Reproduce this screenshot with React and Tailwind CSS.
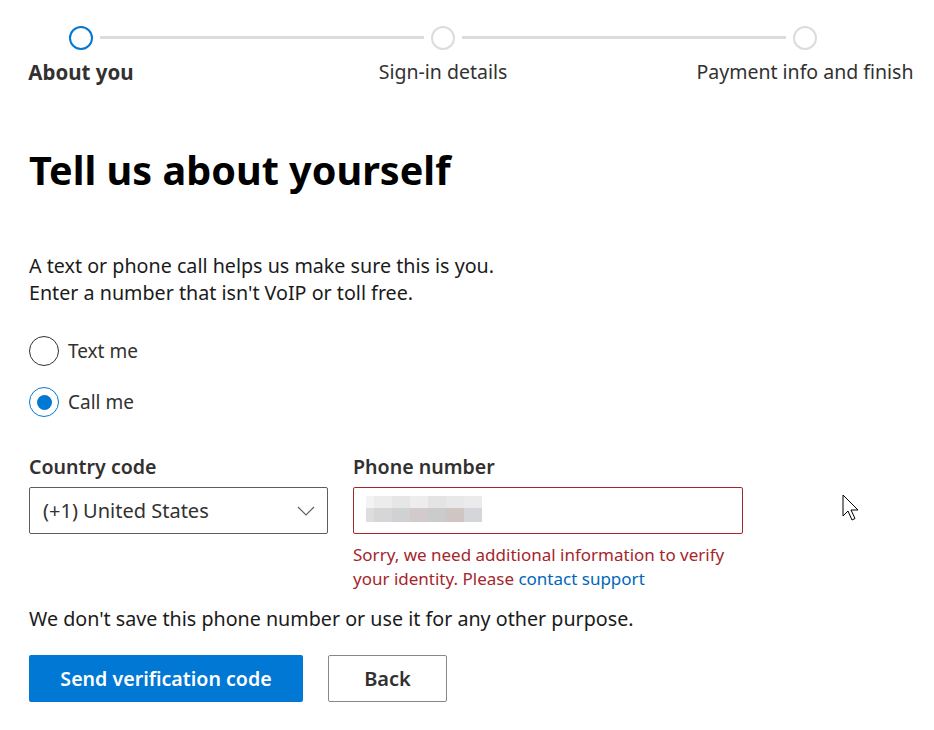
import React from "react";

function Step({ label, active, bold }) {
  return (
    <div className="flex w-6 flex-col items-center">
      <div
        className={`h-6 w-6 rounded-full border-2 ${active ? "border-[#0078d4]" : "border-[#dcdcdc]"}`}
      />
      <div
        className={`mt-[10px] whitespace-nowrap leading-6 text-[#323130] ${bold ? "text-[20.5px] font-bold" : "text-[19.5px]"}`}
      >
        {label}
      </div>
    </div>
  );
}

function Radio({ label, checked }) {
  return (
    <label className="flex h-[30px] items-center gap-[9px]">
      <span
        className={`flex h-[30px] w-[30px] items-center justify-center rounded-full border ${checked ? "border-[#0078d4]" : "border-[#323130]"}`}
      >
        {checked && <span className="h-[15px] w-[15px] rounded-full bg-[#0078d4]" />}
      </span>
      <span className="text-[19px] text-[#323130]">{label}</span>
    </label>
  );
}

export default function App() {
  return (
    <div
      className="relative min-h-[730px] w-[934px] bg-white px-[29px] pt-[26px] text-[#1b1b1b]"
      style={{ fontFamily: '"Noto Sans", "Open Sans", Arial, sans-serif' }}
    >
      {/* stepper */}
      <div className="ml-[40px] flex w-[748px] items-start">
        <Step label="About you" active bold />
        <div className="mx-[7px] mt-[10px] h-[3px] flex-1 bg-[#dcdcdc]" />
        <Step label="Sign-in details" />
        <div className="mx-[7px] mt-[10px] h-[3px] flex-1 bg-[#dcdcdc]" />
        <Step label="Payment info and finish" />
      </div>

      <h1 className="mt-[62px] text-[39.6px] font-bold leading-[48px] text-black">Tell us about yourself</h1>

      <p className="mt-[58px] text-[19.7px] leading-[27px]">
        A text or phone call helps us make sure this is you.
        <br />
        Enter a number that isn't VoIP or toll free.
      </p>

      <div className="mt-[30px] flex flex-col gap-[21px]">
        <Radio label="Text me" />
        <Radio label="Call me" checked />
      </div>

      <div className="mt-[38px] flex gap-[25px]">
        <div className="w-[299px]">
          <div className="text-[19.6px] font-semibold leading-6 text-[#323130]">Country code</div>
          <div className="mt-[8px] flex h-[47px] items-center justify-between rounded-[2px] border border-[#605e5c] pl-[13px] pr-[12px]">
            <span className="text-[20px] text-[#323130]">(+1) United States</span>
            <svg width="18" height="10" viewBox="0 0 18 10" fill="none">
              <path d="M1 1l8 8 8-8" stroke="#605e5c" strokeWidth="1.2" />
            </svg>
          </div>
        </div>
        <div className="w-[390px]">
          <div className="text-[19.6px] font-semibold leading-6 text-[#323130]">Phone number</div>
          <div className="relative mt-[8px] h-[47px] rounded-[2px] border border-[#a4262c]">
            <div className="absolute left-[12px] top-[8px] flex flex-col">
              <div className="flex h-[12px]">
                <span className="w-[8px] bg-[#f3f3f3]" />
                <span className="w-[18px] bg-[#ececec]" />
                <span className="w-[18px] bg-[#e6e6e6]" />
                <span className="w-[18px] bg-[#ededed]" />
                <span className="w-[18px] bg-[#e4e4e4]" />
                <span className="w-[18px] bg-[#e8e8e8]" />
                <span className="w-[18px] bg-[#ebebeb]" />
              </div>
              <div className="flex h-[14px]">
                <span className="w-[8px] bg-[#dedcdc]" />
                <span className="w-[18px] bg-[#d6d6d8]" />
                <span className="w-[18px] bg-[#cfd1d3]" />
                <span className="w-[18px] bg-[#d2cacb]" />
                <span className="w-[18px] bg-[#c9cbcd]" />
                <span className="w-[18px] bg-[#cfc6c4]" />
                <span className="w-[18px] bg-[#d5d6d9]" />
              </div>
            </div>
          </div>
          <p className="mt-[9px] text-[17px] leading-6 text-[#a4262c]">
            Sorry, we need additional information to verify your identity. Please{" "}
            <span className="text-[#0067b8]">contact support</span>
          </p>
        </div>
      </div>

      <p className="mt-[14px] text-[19.7px] leading-[27px]">
        We don't save this phone number or use it for any other purpose.
      </p>

      <div className="mt-[23px] flex gap-[25px]">
        <button className="h-[47px] w-[274px] rounded-[2px] bg-[#0078d4] text-[19.6px] font-semibold text-white">
          Send verification code
        </button>
        <button className="h-[47px] w-[119px] rounded-[2px] border border-[#8a8886] bg-white text-[20px] font-semibold text-[#323130]">
          Back
        </button>
      </div>

      {/* mouse pointer */}
      <svg className="absolute left-[842px] top-[494px]" width="20" height="30" viewBox="0 0 20 30">
        <path
          d="M1 1v21l5-5 4 9 3-1.5-4-8.5h7z"
          fill="#fff"
          stroke="#000"
          strokeWidth="1"
          strokeLinejoin="round"
        />
      </svg>
    </div>
  );
}
